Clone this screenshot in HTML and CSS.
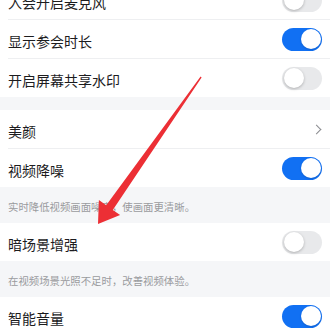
FILE: index.html
```html
<!DOCTYPE html>
<html lang="zh">
<head>
<meta charset="utf-8">
<link rel="stylesheet" href="styles.css">
</head>
<body>
<div class="page">
  <div class="group first">
    <div class="row"><span class="label">入会开启麦克风</span><span class="toggle"></span></div>
    <div class="row"><span class="label">显示参会时长</span><span class="toggle on"></span></div>
    <div class="row last"><span class="label">开启屏幕共享水印</span><span class="toggle"></span></div>
  </div>
  <div class="gap"></div>
  <div class="group">
    <div class="row"><span class="label">美颜</span><span class="chev"></span></div>
    <div class="row last"><span class="label">视频降噪</span><span class="toggle on"></span></div>
  </div>
  <div class="desc">实时降低视频画面噪声，使画面更清晰。</div>
  <div class="group">
    <div class="row last"><span class="label">暗场景增强</span><span class="toggle"></span></div>
  </div>
  <div class="desc">在视频场景光照不足时，改善视频体验。</div>
  <div class="group">
    <div class="row last"><span class="label">智能音量</span><span class="toggle on"></span></div>
  </div>
  <svg class="arrow" width="330" height="331" viewBox="0 0 330 331">
    <polygon points="201.6,96.4 112.8,228.9 120.1,234.1 98,243 98.9,219.1 106.2,224.3 200.6,95.6" fill="#ec2f35"/>
  </svg>
</div>
</body>
</html>
```
FILE: styles.css
```css
* { box-sizing: border-box; }
html, body { margin: 0; padding: 0; }
body {
  width: 330px;
  height: 331px;
  overflow: hidden;
  background: #f5f6f8;
  font-family: "Noto Sans CJK SC", "Noto Sans", sans-serif;
}
.page { position: relative; width: 330px; height: 331px; }
.group { background: #fff; padding-left: 8px; }
.group.first { margin-top: -19px; }
.row {
  height: 39px;
  display: flex;
  align-items: center;
  justify-content: space-between;
  padding-right: 8px;
  border-bottom: 1px solid #eeeff1;
}
.row.last { border-bottom: none; height: 38px; }
.label { font-size: 14px; color: #1c1c1e; padding-top: 4px; }
.gap { height: 13px; }
.desc {
  height: 36px;
  display: flex;
  align-items: center;
  padding-left: 8px;
  padding-top: 2px;
  font-size: 10.4px;
  color: #9a9b9e;
}
.toggle {
  position: relative;
  width: 40px;
  height: 23px;
  border-radius: 12px;
  background: #e8e9eb;
}
.toggle::after {
  content: "";
  position: absolute;
  top: 1.5px;
  left: 1.5px;
  width: 20px;
  height: 20px;
  border-radius: 50%;
  background: #fff;
  box-shadow: 0 1px 3px rgba(0,0,0,0.25);
}
.toggle.on { background: #1170f3; }
.toggle.on::after { left: 18.5px; box-shadow: 0 1px 2px rgba(0,0,0,0.15); }
.chev {
  width: 7px;
  height: 7px;
  border-top: 1.2px solid #8a8b8f;
  border-right: 1.2px solid #8a8b8f;
  transform: rotate(45deg);
  margin-right: 2px;
}
.arrow { position: absolute; top: 0; left: 0; pointer-events: none; }
```
